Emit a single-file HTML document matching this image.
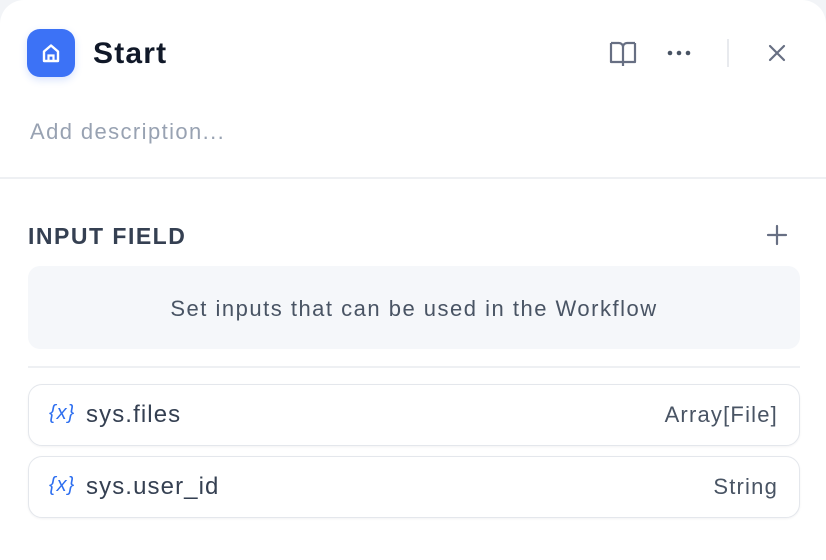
<!DOCTYPE html>
<html><head><style>
*{margin:0;padding:0;box-sizing:border-box}
body{width:826px;height:546px;background:#f2f4f7;font-family:"Liberation Sans",sans-serif;overflow:hidden;position:relative}
.panel{position:absolute;left:0;top:0;width:826px;height:560px;background:#fff;border-radius:24px 24px 0 0}
.abs{position:absolute}
.row{position:absolute;left:28px;width:772px;height:62px;border:1.5px solid #e4e7ec;border-radius:14px;background:#fff;box-shadow:0 1px 2px rgba(16,24,40,.05)}
.row .x{position:absolute;left:20px;top:17px;color:#2e6ff0;font-style:italic;font-size:20px;letter-spacing:1px}
.row .n{position:absolute;left:57px;top:16px;font-size:24px;letter-spacing:1.1px;color:#354052}
.row .t{position:absolute;right:21px;top:17px;font-size:22px;letter-spacing:1.2px;color:#495464}
</style></head><body>
<div class="panel">
<div class="abs" style="left:27px;top:29px;width:48px;height:48px;border-radius:13px;background:#3c72f6;box-shadow:0 3px 8px rgba(60,114,246,.2)">
<svg width="48" height="48" viewBox="0 0 48 48"><path d="M17 32V22.5L24 16.5L31 22.5V32Z" fill="none" stroke="#fff" stroke-width="2.4" stroke-linejoin="round"/><path d="M21.5 32V26.5h5V32" fill="none" stroke="#fff" stroke-width="2.2"/></svg>
</div>
<div class="abs" style="left:93px;top:37px;font-size:30px;font-weight:bold;letter-spacing:1.2px;color:#101828">Start</div>
<svg class="abs" style="left:608px;top:40px" width="30" height="28" viewBox="0 0 30 28"><path d="M3 3h8a4 4 0 0 1 4 4v19M27 3h-8a4 4 0 0 0-4 4M3 3v19h12M27 3v19H15" fill="none" stroke="#676f83" stroke-width="2.2" stroke-linejoin="round"/></svg>
<svg class="abs" style="left:666px;top:49px" width="28" height="8"><circle cx="4" cy="4" r="2.3" fill="#495464"/><circle cx="13" cy="4" r="2.3" fill="#495464"/><circle cx="22" cy="4" r="2.3" fill="#495464"/></svg>
<div class="abs" style="left:727px;top:39px;width:1.5px;height:28px;background:#e8eaee"></div>
<svg class="abs" style="left:767px;top:43px" width="20" height="20"><path d="M3 3L17 17M17 3L3 17" stroke="#676f83" stroke-width="2.2" stroke-linecap="round"/></svg>
<div class="abs" style="left:30px;top:119px;font-size:22px;letter-spacing:1.4px;color:#98a2b2">Add description...</div>
<div class="abs" style="left:0;top:177px;width:826px;height:1.5px;background:#eef0f3"></div>
<div class="abs" style="left:28px;top:223px;font-size:23px;font-weight:bold;letter-spacing:1.5px;color:#354052">INPUT FIELD</div>
<svg class="abs" style="left:766px;top:224px" width="22" height="22"><path d="M11 2v18M2 11h18" stroke="#676f83" stroke-width="2.2" stroke-linecap="round"/></svg>
<div class="abs" style="left:28px;top:266px;width:772px;height:83px;background:#f5f7fa;border-radius:12px;text-align:center;line-height:85px;font-size:22px;letter-spacing:1.5px;color:#495464">Set inputs that can be used in the Workflow</div>
<div class="abs" style="left:28px;top:366px;width:772px;height:1.5px;background:#eef0f3"></div>
<div class="row" style="top:384px"><span class="x">{x}</span><span class="n">sys.files</span><span class="t">Array[File]</span></div>
<div class="row" style="top:456px"><span class="x">{x}</span><span class="n">sys.user_id</span><span class="t">String</span></div>
</div>
</body></html>
